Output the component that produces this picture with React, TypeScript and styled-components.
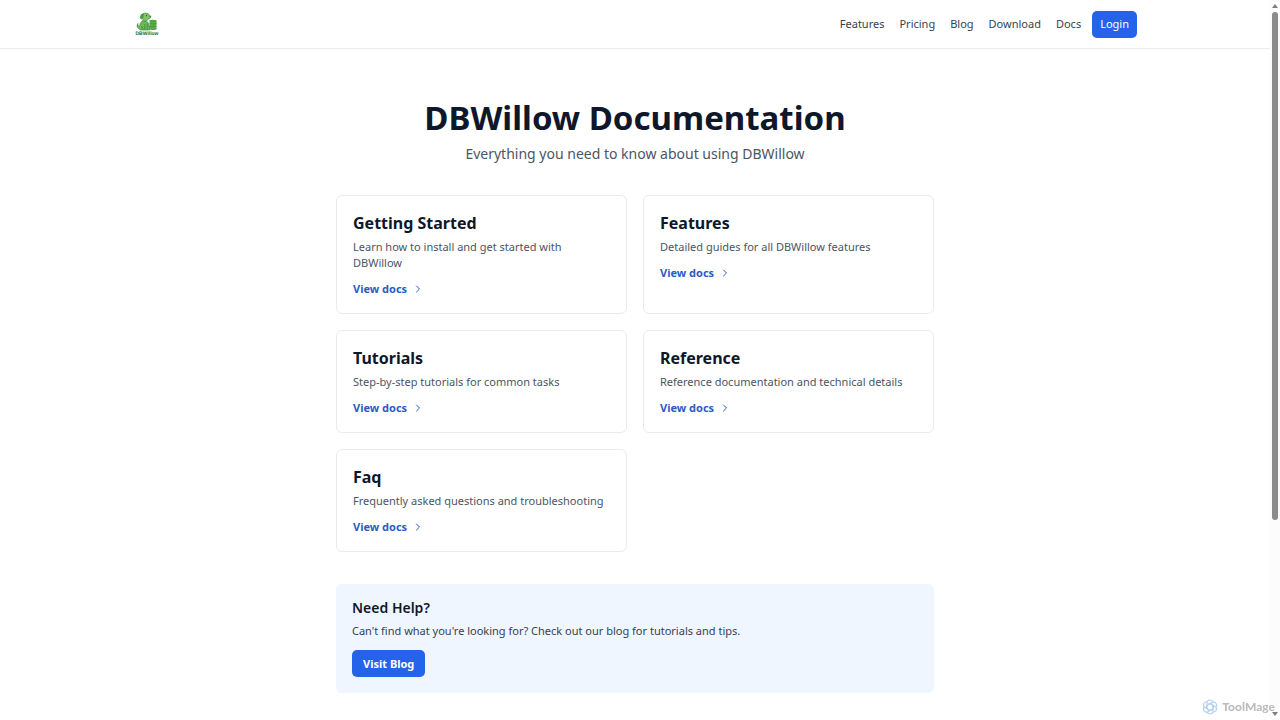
import React from "react";
import styled, { createGlobalStyle } from "styled-components";
import { ChevronRight } from "lucide-react";

const GlobalStyle = createGlobalStyle`
  *, *::before, *::after { box-sizing: border-box; }
  body {
    margin: 0;
    background: #ffffff;
    color: #0f172a;
    font-family: "Noto Sans", "Open Sans", sans-serif;
    font-size: 11px;
    line-height: 16px;
  }
  h1, h2, p { margin: 0; }
  a { color: inherit; text-decoration: none; }
`;

const Frame = styled.div`
  display: flex;
  height: 100vh;
  overflow: hidden;
`;

const Page = styled.div`
  flex: 1;
  min-width: 0;
`;

const Header = styled.header`
  border-bottom: 1px solid #ebedf0;
`;

const HeaderInner = styled.div`
  display: flex;
  align-items: center;
  justify-content: space-between;
  max-width: 1004px;
  height: 48px;
  margin: 0 auto;
`;

const LogoLink = styled.a`
  display: flex;
  padding-left: 2px;
`;

const Nav = styled.nav`
  display: flex;
  align-items: center;
  gap: 15px;
  color: #374151;
`;

const Actions = styled.div`
  display: flex;
  align-items: center;
  gap: 11px;
`;

const ButtonLink = styled.a<{ $strong?: boolean }>`
  display: inline-flex;
  align-items: center;
  height: 27px;
  padding: 0 ${(p) => (p.$strong ? 11 : 8)}px;
  border-radius: 5px;
  background: #2563eb;
  color: #ffffff;
  font-weight: ${(p) => (p.$strong ? 700 : 400)};
`;

const Main = styled.main`
  max-width: 598px;
  margin: 0 auto;
  padding: 49px 0;
`;

const Intro = styled.div`
  margin-bottom: 31px;
  text-align: center;
`;

const Title = styled.h1`
  margin-bottom: 6px;
  font-size: 33px;
  line-height: 40px;
  font-weight: 700;
`;

const Subtitle = styled.p`
  color: #4b5563;
  font-size: 14px;
  line-height: 20px;
`;

const CardGrid = styled.div`
  display: grid;
  grid-template-columns: repeat(2, minmax(0, 1fr));
  gap: 16px;
  margin-bottom: 32px;
`;

const Card = styled.a`
  display: block;
  padding: 16px;
  border: 1px solid #e9ebee;
  border-radius: 6px;
`;

const CardTitle = styled.h2`
  margin-bottom: 5px;
  font-size: 16px;
  line-height: 22px;
  font-weight: 700;
`;

const CardText = styled.p`
  margin-bottom: 10px;
  color: #4b5563;
`;

const ViewDocs = styled.span`
  display: flex;
  align-items: center;
  gap: 5px;
  color: #2a5cc4;
  font-weight: 700;
`;

const Help = styled.section`
  padding: 16px;
  border-radius: 6px;
  background: #eff6ff;
`;

const HelpTitle = styled.h2`
  margin-bottom: 7px;
  font-size: 14px;
  line-height: 16px;
  font-weight: 600;
`;

const HelpText = styled.p`
  margin-bottom: 11px;
  color: #374151;
`;

const Scrollbar = styled.div`
  display: flex;
  flex-direction: column;
  align-items: center;
  gap: 4px;
  width: 10px;
  padding: 4px 0;
  background: #fcfcfc;
`;

const Track = styled.div`
  flex: 1;
  width: 6px;
`;

const Thumb = styled.div`
  height: 73%;
  border-radius: 3px;
  background: #8b8b8b;
`;

const Watermark = styled.div`
  position: fixed;
  right: 5px;
  bottom: 5px;
  display: flex;
  align-items: center;
  gap: 4px;
  color: #bdbdbd;
  font-family: Lato, sans-serif;
  font-size: 12px;
  font-weight: 900;
`;

function WillowLogo() {
  return (
    <svg width="24" height="24" viewBox="0 0 24 24" role="img" aria-label="DBWillow">
      <path d="M14.500 8.500q3.500-1.500 7 0v8.500q-3.500 1.500-7 0z" fill="#5fae4c" />
      <path d="M14.500 8.800q3.500 1.400 7 0M14.500 11.500q3.500 1.200 7 0M14.500 14.200q3.500 1.200 7 0M14.500 17q3.500 1.200 7 0" stroke="#3a8a3a" strokeWidth=".7" fill="none" />
      <path
        d="M7.500 8.500Q4.500 11 4.500 14.500 2.500 14 2.800 11.500 1.500 13.500 2.500 15.500 3.300 16.800 4.500 16.800q0 1.200 1.500 1.200h8.500q.3-5-1.800-8z"
        fill="#6cb957"
        stroke="#2f7f35"
        strokeWidth=".6"
      />
      <path
        d="M7.500 2Q9.500.6 12 1.200q2 .5 2.500 2.300 1.500.4 1.400 1.500-.3 2-3 2.100-.5 2-2.400 2Q8 9 7.500 6.500z"
        fill="#7cc466"
        stroke="#2f7f35"
        strokeWidth=".6"
      />
      <path d="M8.300 1.800Q5.800 2 5.300 4.500q-.2 2 .9 2.600 1.600-.3 1.900-2.800z" fill="#4c9d42" stroke="#2f7f35" strokeWidth=".5" />
      <path d="M9.800 12v5.700M12.200 11.500v6.200M6 14.500q2 .5 2 3" fill="none" stroke="#2f7f35" strokeWidth=".6" />
      <path d="M11 3.700h1M14.600 4.400h1" stroke="#174d20" strokeWidth="1" />
      <text x="12" y="22.500" textAnchor="middle" textRendering="geometricPrecision" fontFamily="Liberation Sans, sans-serif" fontSize="5" fontWeight="700" fill="#226b2b">
        DBWillow
      </text>
    </svg>
  );
}

function KnotMark() {
  return (
    <svg width="16" height="16" viewBox="0 0 16 16" fill="none" stroke="#b5cef5" strokeWidth="1.200" aria-hidden="true">
      {[0, 60, 120, 180, 240, 300].map((angle) => (
        <path key={angle} transform={`rotate(${angle} 8 8)`} d="M5 9V3.500Q5.500 1 8 1q2 0 3 1.700M5 6l3-1.700" />
      ))}
    </svg>
  );
}

function Arrow({ down = false }: { down?: boolean }) {
  return (
    <svg width="6" height="4" viewBox="0 0 6 4" aria-hidden="true">
      <path d={down ? "M0 0h6L3 4z" : "M0 4h6L3 0z"} fill="#7d7d7d" />
    </svg>
  );
}

const links = ["Features", "Pricing", "Blog", "Download", "Docs"];

const sections = [
  { title: "Getting Started", text: "Learn how to install and get started with DBWillow" },
  { title: "Features", text: "Detailed guides for all DBWillow features" },
  { title: "Tutorials", text: "Step-by-step tutorials for common tasks" },
  { title: "Reference", text: "Reference documentation and technical details" },
  { title: "Faq", text: "Frequently asked questions and troubleshooting" },
];

export default function App() {
  return (
    <>
      <GlobalStyle />
      <Frame>
        <Page>
          <Header>
            <HeaderInner>
              <LogoLink href="#">
                <WillowLogo />
              </LogoLink>
              <Actions>
                <Nav>
                  {links.map((label) => (
                    <a key={label} href={`#${label.toLowerCase()}`}>
                      {label}
                    </a>
                  ))}
                </Nav>
                <ButtonLink href="#login">Login</ButtonLink>
              </Actions>
            </HeaderInner>
          </Header>
          <Main>
            <Intro>
              <Title>DBWillow Documentation</Title>
              <Subtitle>Everything you need to know about using DBWillow</Subtitle>
            </Intro>
            <CardGrid>
              {sections.map(({ title, text }) => (
                <Card key={title} href={`#docs-${title.toLowerCase().replace(" ", "-")}`}>
                  <CardTitle>{title}</CardTitle>
                  <CardText>{text}</CardText>
                  <ViewDocs>
                    View docs
                    <ChevronRight size={12} strokeWidth={2} />
                  </ViewDocs>
                </Card>
              ))}
            </CardGrid>
            <Help>
              <HelpTitle>Need Help?</HelpTitle>
              <HelpText>Can't find what you're looking for? Check out our blog for tutorials and tips.</HelpText>
              <ButtonLink href="#blog" $strong>
                Visit Blog
              </ButtonLink>
            </Help>
          </Main>
        </Page>
        <Scrollbar aria-hidden="true">
          <Arrow />
          <Track>
            <Thumb />
          </Track>
          <Arrow down />
        </Scrollbar>
      </Frame>
      <Watermark>
        <KnotMark />
        ToolMage
      </Watermark>
    </>
  );
}
